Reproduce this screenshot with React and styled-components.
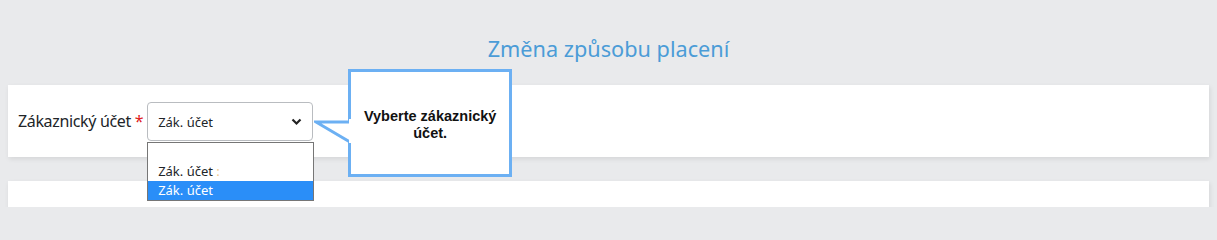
import styled, { createGlobalStyle } from 'styled-components';

const GlobalStyle = createGlobalStyle`
  html, body {
    margin: 0;
    padding: 0;
    background: #e9eaec;
    font-family: 'Noto Sans', 'Open Sans', sans-serif;
  }
`;

export default function App() {
  return (
    <>
      <GlobalStyle />
      <Page>
        <Title>Změna způsobu placení</Title>
        <Card>
          <FieldRow>
            <Label>
              Zákaznický účet <Required>*</Required>
            </Label>
            <SelectWrap>
              <SelectBox>
                <span>Zák. účet</span>
                <svg width="11" height="8" viewBox="0 0 11 8">
                  <path d="M1.5 1.5 L5.5 5.5 L9.5 1.5" fill="none" stroke="#222" strokeWidth="2.2" />
                </svg>
              </SelectBox>
              <OptionList>
                <Option />
                <Option>
                  Zák. účet <Faint>:</Faint>
                </Option>
                <Option $selected>Zák. účet</Option>
              </OptionList>
              <Tooltip>
                <svg width="38" height="24" viewBox="0 0 38 24">
                  <path d="M36 3 L2 3 L36 23" fill="#fff" stroke="#6cb0f3" strokeWidth="3" />
                  <rect x="35" y="0" width="4" height="24" fill="#fff" />
                </svg>
                Vyberte zákaznický účet.
              </Tooltip>
            </SelectWrap>
          </FieldRow>
        </Card>
        <Card $last />
      </Page>
    </>
  );
}

const Page = styled.div`
  padding: 0 8px;
  height: 207px;
  overflow: hidden;
`;

const Title = styled.h2`
  margin: 0;
  padding: 34px 0 22px;
  text-align: center;
  font-weight: 400;
  font-size: 21.7px;
  line-height: 29px;
  color: #4b9cd7;
`;

const Card = styled.div`
  background: #fff;
  height: ${({ $last }) => ($last ? '60px' : '72px')};
  margin-bottom: 24px;
  box-shadow: 1px 2px 5px rgba(0, 0, 0, 0.09);
  display: flex;
  align-items: center;
  padding: 0 10px;
`;

const FieldRow = styled.div`
  display: flex;
  align-items: center;
  gap: 4px;
`;

const Label = styled.label`
  font-size: 16px;
  letter-spacing: -0.35px;
  color: #212529;
`;

const Required = styled.span`
  color: #e0201b;
`;

const SelectWrap = styled.div`
  position: relative;
`;

const SelectBox = styled.div`
  box-sizing: border-box;
  width: 166px;
  height: 39px;
  border: 1px solid #b9bcc0;
  border-radius: 4px;
  display: flex;
  align-items: center;
  justify-content: space-between;
  padding: 2px 10px 0 10px;
  font-size: 13px;
  color: #212529;
`;

const OptionList = styled.div`
  position: absolute;
  top: 40px;
  left: 0;
  box-sizing: border-box;
  width: 167px;
  background: #fff;
  border: 1px solid #767676;
  z-index: 2;
`;

const Option = styled.div`
  height: 19.3px;
  line-height: 19px;
  padding: 0 10px;
  font-size: 13px;
  background: ${({ $selected }) => ($selected ? '#2a8ef8' : 'transparent')};
  color: ${({ $selected }) => ($selected ? '#fff' : '#212529')};
`;

const Faint = styled.span`
  color: #f0c88a;
`;

const Tooltip = styled.div`
  position: absolute;
  left: 201px;
  top: -33px;
  box-sizing: border-box;
  width: 164px;
  height: 108px;
  background: #fff;
  border: 3px solid #6cb0f3;
  display: flex;
  align-items: center;
  justify-content: center;
  text-align: center;
  padding: 5px 8px 0;
  font-family: 'Liberation Sans', Arial, sans-serif;
  font-weight: 700;
  font-size: 14.5px;
  line-height: 17px;
  color: #111;
  z-index: 3;

  & svg {
    position: absolute;
    left: -37px;
    top: 47px;
  }
`;
